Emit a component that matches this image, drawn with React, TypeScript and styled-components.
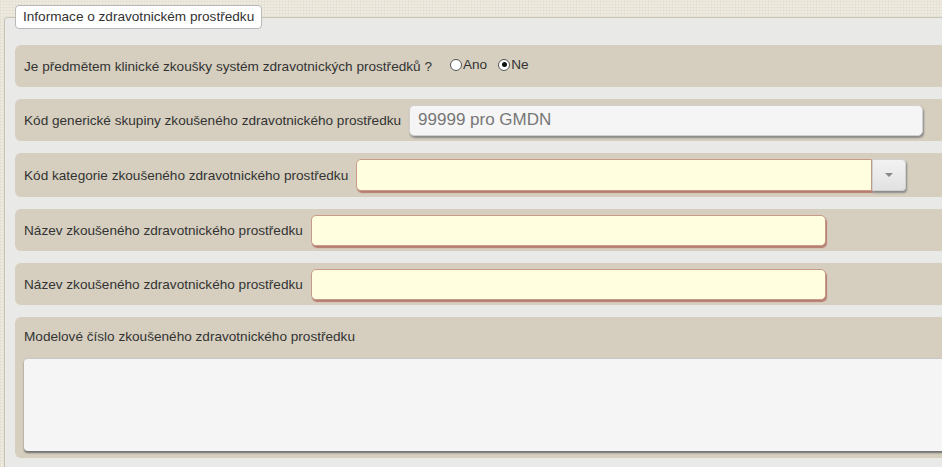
import React from "react";
import styled, { createGlobalStyle } from "styled-components";

const Global = createGlobalStyle`
  html, body { margin: 0; padding: 0; overflow: hidden; }
  body {
    width: 942px; height: 467px;
    background-color: #eeeadf;
    background-image:
      repeating-linear-gradient(0deg, rgba(180,170,150,0.10) 0 1px, transparent 1px 3px),
      repeating-linear-gradient(90deg, rgba(180,170,150,0.10) 0 1px, transparent 1px 3px);
    font-family: "Liberation Sans", Arial, sans-serif;
  }
`;

const Page = styled.div`
  padding: 5px 0 0 4px;
  width: 1100px;
`;

const Fieldset = styled.fieldset`
  margin: 0;
  padding: 16px 0 10px 10px;
  border: 1px solid #c6c5b8;
  border-radius: 3px;
  background: #e9e9e7;
  display: flex;
  flex-direction: column;
  gap: 12px;
  position: relative;
`;

const Legend = styled.legend`
  margin-left: 0;
  padding: 4px 7px 4px 7px;
  background: #fff;
  border: 1px solid #b9b9b9;
  border-radius: 4px;
  font-size: 13.6px;
  color: #333;
  line-height: 14px;
`;

const Row = styled.div<{ $tall?: boolean; $h: number }>`
  display: flex;
  flex-direction: ${(p) => (p.$tall ? "column" : "row")};
  align-items: ${(p) => (p.$tall ? "stretch" : "center")};
  gap: ${(p) => (p.$tall ? "14px" : "8px")};
  height: ${(p) => p.$h}px;
  box-sizing: border-box;
  padding: ${(p) => (p.$tall ? "12px 0 7px 9px" : "0 0 0 9px")};
  background: #d6cfbf;
  border-radius: 6px 0 0 6px;
`;

const Label = styled.span`
  font-size: 13.6px;
  color: #333;
  white-space: nowrap;
`;

const Radios = styled.div`
  display: flex;
  align-items: center;
  gap: 11px;
  margin-left: 10px;
  margin-top: -3px;
`;

const RadioLabel = styled.label`
  display: flex;
  align-items: center;
  font-size: 13.6px;
  color: #333;
`;

const RadioDot = styled.span<{ $on?: boolean }>`
  width: 12px;
  height: 12px;
  border-radius: 50%;
  border: 1px solid #555;
  background: #fff;
  box-sizing: border-box;
  position: relative;
  margin-right: 1px;
  &::after {
    content: "";
    display: ${(p) => (p.$on ? "block" : "none")};
    position: absolute;
    left: 2.5px; top: 2.5px;
    width: 5px; height: 5px;
    border-radius: 50%;
    background: #111;
  }
`;

const TextInput = styled.div<{ $w: number; $yellow?: boolean }>`
  width: ${(p) => p.$w}px;
  height: 31px;
  box-sizing: border-box;
  border-radius: 5px;
  background: ${(p) => (p.$yellow ? "#ffffe0" : "#f5f5f5")};
  border: 1px solid ${(p) => (p.$yellow ? "#c79a8a" : "#d0d0d0")};
  box-shadow: ${(p) =>
    p.$yellow ? "1px 2px 1px #b77d72" : "1px 2px 2px #8a8a8a"};
  display: flex;
  align-items: center;
  padding-left: 8px;
  font-size: 17px;
  color: #777;
`;

const SelectWrap = styled.div`
  display: flex;
  align-items: stretch;
  height: 32px;
`;

const SelectField = styled.div`
  width: 516px;
  box-sizing: border-box;
  background: #ffffe0;
  border: 1px solid #c79a8a;
  border-radius: 5px 0 0 5px;
  box-shadow: 1px 2px 1px #b77d72;
`;

const SelectButton = styled.div`
  width: 34px;
  box-sizing: border-box;
  background: linear-gradient(#f2f2f2, #e2e2e2);
  border: 1px solid #d0d0d0;
  border-radius: 0 4px 4px 0;
  box-shadow: 1px 2px 2px #8a8a8a;
  display: flex;
  align-items: center;
  justify-content: center;
`;

const Caret = styled.span`
  width: 0; height: 0;
  border-left: 4px solid transparent;
  border-right: 4px solid transparent;
  border-top: 4px solid #888;
`;

const TextArea = styled.div`
  flex: 1;
  background: #f5f5f5;
  border-top: 1px solid #c8c8c8;
  border-radius: 4px 0 0 4px;
  box-shadow: 0 2px 2px #6f6f6f;
`;

export default function App() {
  return (
    <>
      <Global />
      <Page>
        <Fieldset>
          <Legend>Informace o zdravotnickém prostředku</Legend>
          <Row $h={42}>
            <Label>Je předmětem klinické zkoušky systém zdravotnických prostředků ?</Label>
            <Radios>
              <RadioLabel><RadioDot />Ano</RadioLabel>
              <RadioLabel><RadioDot $on />Ne</RadioLabel>
            </Radios>
          </Row>
          <Row $h={42}>
            <Label>Kód generické skupiny zkoušeného zdravotnického prostředku</Label>
            <TextInput $w={514}>99999 pro GMDN</TextInput>
          </Row>
          <Row $h={44}>
            <Label>Kód kategorie zkoušeného zdravotnického prostředku</Label>
            <SelectWrap>
              <SelectField />
              <SelectButton><Caret /></SelectButton>
            </SelectWrap>
          </Row>
          <Row $h={42}>
            <Label>Název zkoušeného zdravotnického prostředku</Label>
            <TextInput $w={515} $yellow />
          </Row>
          <Row $h={42}>
            <Label>Název zkoušeného zdravotnického prostředku</Label>
            <TextInput $w={515} $yellow />
          </Row>
          <Row $h={141} $tall>
            <Label>Modelové číslo zkoušeného zdravotnického prostředku</Label>
            <TextArea />
          </Row>
        </Fieldset>
      </Page>
    </>
  );
}
